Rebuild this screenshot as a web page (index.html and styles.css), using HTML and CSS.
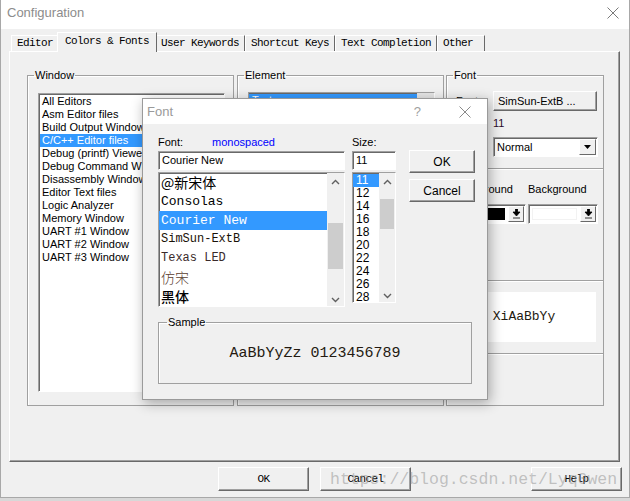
FILE: index.html
```html
<!DOCTYPE html>
<html lang="en">
<head>
    <meta charset="UTF-8">
    <title>Configuration</title>
    <link rel="stylesheet" href="styles.css">
</head>
<body>
    <div class="config">
        <div class="titlebar">
            <span class="title">Configuration</span>
            <svg class="close-icon" width="12" height="12" viewBox="0 0 12 12"><path d="M0.5 0.5 L11.5 11.5 M11.5 0.5 L0.5 11.5" stroke="#7a7a7a" stroke-width="1" fill="none"/></svg>
        </div>

        <div class="tabs">
            <div class="tab">Editor</div>
            <div class="tab active">Colors &amp; Fonts</div>
            <div class="tab">User Keywords</div>
            <div class="tab">Shortcut Keys</div>
            <div class="tab">Text Completion</div>
            <div class="tab tab-other">Other</div>
        </div>

        <div class="panel">
            <fieldset class="group group-window">
                <legend>Window</legend>
                <div class="listbox window-list">
                    <div class="items">
                        <div class="item">All Editors</div>
                        <div class="item">Asm Editor files</div>
                        <div class="item">Build Output Window</div>
                        <div class="item selected">C/C++ Editor files</div>
                        <div class="item">Debug (printf) Viewer</div>
                        <div class="item">Debug Command Window</div>
                        <div class="item">Disassembly Window</div>
                        <div class="item">Editor Text files</div>
                        <div class="item">Logic Analyzer</div>
                        <div class="item">Memory Window</div>
                        <div class="item">UART #1 Window</div>
                        <div class="item">UART #2 Window</div>
                        <div class="item">UART #3 Window</div>
                    </div>
                </div>
            </fieldset>

            <fieldset class="group group-element">
                <legend>Element</legend>
                <div class="listbox element-list">
                    <div class="items">
                        <div class="item selected">Text</div>
                    </div>
                    <div class="scrollbar"></div>
                </div>
            </fieldset>

            <fieldset class="group group-font">
                <legend>Font</legend>
                <div class="font-row">
                    <span class="row-label">Font:</span>
                    <button class="btn font-btn">SimSun-ExtB ...</button>
                </div>
                <div class="size-row">
                    <span class="row-label">Size:</span>
                    <span>11</span>
                </div>
                <div class="style-row">
                    <span class="row-label">Style:</span>
                    <div class="combo">
                        <span class="combo-text">Normal</span>
                        <span class="combo-arrow">
                            <svg width="7" height="4" viewBox="0 0 7 4"><path d="M0 0 H7 L3.5 4 Z" fill="#000"/></svg>
                        </span>
                    </div>
                </div>

                <div class="section colors">
                    <div class="color-col">
                        <span class="color-label">Foreground</span>
                        <div class="color-pick">
                            <span class="swatch swatch-black"></span>
                            <span class="pick-arrow">
                                <svg width="9" height="10" viewBox="0 0 9 10"><path d="M3.5 0 H5.5 V3 H8 L4.5 7 L1 3 H3.5 Z M1 9 H8" fill="#000" stroke="#000" stroke-width="0.8"/></svg>
                            </span>
                        </div>
                    </div>
                    <div class="color-col">
                        <span class="color-label">Background</span>
                        <div class="color-pick">
                            <span class="swatch swatch-white"></span>
                            <span class="pick-arrow">
                                <svg width="9" height="10" viewBox="0 0 9 10"><path d="M3.5 0 H5.5 V3 H8 L4.5 7 L1 3 H3.5 Z M1 9 H8" fill="#000" stroke="#000" stroke-width="0.8"/></svg>
                            </span>
                        </div>
                    </div>
                </div>

                <div class="section preview">
                    <div class="preview-box">XiAaBbYy</div>
                </div>
                <div class="section rest"></div>
            </fieldset>
        </div>

        <div class="actions">
            <button class="btn action-btn">OK</button>
            <button class="btn action-btn">Cancel</button>
            <button class="btn action-btn help-btn">Help</button>
        </div>

        <div class="watermark">https://blog.csdn.net/Lyq0wen</div>
    </div>

    <!-- Font dialog, floating over the configuration window -->
    <div class="font-dialog">
        <div class="fd-titlebar">
            <span class="fd-title">Font</span>
            <span class="fd-help">?</span>
            <svg class="fd-close" width="12" height="12" viewBox="0 0 12 12"><path d="M0.5 0.5 L11.5 11.5 M11.5 0.5 L0.5 11.5" stroke="#8a8a8a" stroke-width="1" fill="none"/></svg>
        </div>

        <div class="fd-body">
            <div class="fd-main">
                <div class="fd-col-font">
                    <div class="fd-label"><span class="fd-label-name">Font:</span><span class="fd-hint">monospaced</span></div>
                    <div class="textbox">Courier New</div>
                    <div class="listbox font-list">
                        <div class="items">
                            <div class="item f-cjk">@新宋体</div>
                            <div class="item f-mono">Consolas</div>
                            <div class="item f-mono selected">Courier New</div>
                            <div class="item f-ext">SimSun-ExtB</div>
                            <div class="item f-led">Texas LED</div>
                            <div class="item f-fang">仿宋</div>
                            <div class="item f-hei">黑体</div>
                        </div>
                        <div class="vscroll">
                            <svg class="chev" width="9" height="6" viewBox="0 0 9 6"><path d="M1 5 L4.5 1.5 L8 5" stroke="#606060" stroke-width="1.4" fill="none"/></svg>
                            <div class="thumb thumb-font"></div>
                            <svg class="chev chev-down" width="9" height="6" viewBox="0 0 9 6"><path d="M1 1 L4.5 4.5 L8 1" stroke="#606060" stroke-width="1.4" fill="none"/></svg>
                        </div>
                    </div>
                </div>

                <div class="fd-col-size">
                    <div class="fd-label">Size:</div>
                    <div class="textbox">11</div>
                    <div class="listbox size-list">
                        <div class="items">
                            <div class="item selected">11</div>
                            <div class="item">12</div>
                            <div class="item">14</div>
                            <div class="item">16</div>
                            <div class="item">18</div>
                            <div class="item">20</div>
                            <div class="item">22</div>
                            <div class="item">24</div>
                            <div class="item">26</div>
                            <div class="item">28</div>
                        </div>
                        <div class="vscroll">
                            <svg class="chev" width="9" height="6" viewBox="0 0 9 6"><path d="M1 5 L4.5 1.5 L8 5" stroke="#606060" stroke-width="1.4" fill="none"/></svg>
                            <div class="thumb thumb-size"></div>
                            <svg class="chev chev-down" width="9" height="6" viewBox="0 0 9 6"><path d="M1 1 L4.5 4.5 L8 1" stroke="#606060" stroke-width="1.4" fill="none"/></svg>
                        </div>
                    </div>
                </div>

                <div class="fd-col-buttons">
                    <button class="btn fd-btn">OK</button>
                    <button class="btn fd-btn">Cancel</button>
                </div>
            </div>

            <fieldset class="group sample">
                <legend>Sample</legend>
                <div class="sample-text">AaBbYyZz 0123456789</div>
            </fieldset>
        </div>
    </div>
</body>
</html>
```

FILE: styles.css
```css
/* Basic Reset */
* {
    margin: 0;
    padding: 0;
    box-sizing: border-box;
}

body {
    position: relative;
    width: 630px;
    height: 501px;
    overflow: hidden;
    background: #d8d8d8;
    font-family: "Liberation Sans", Arial, sans-serif;
    font-size: 11px;
    color: #000;
}

button {
    font: inherit;
    color: inherit;
}

/* Configuration window */
.config {
    position: relative;
    width: 630px;
    height: 498px;
    background: #f0f0f0;
    border: 1px solid #a8a8a8;
    border-top: none;
}

.titlebar {
    display: flex;
    align-items: center;
    justify-content: space-between;
    height: 29px;
    padding: 0 10px 4px 6px;
    background: #fff;
}

.title {
    font-size: 13px;
    color: #8c8c8c;
}

/* Tabs */
.tabs {
    display: flex;
    align-items: flex-end;
    height: 22px;
    padding-left: 10px;
}

.tab {
    height: 16px;
    padding: 0 5px;
    border: 1px solid #fff;
    border-bottom: none;
    border-right-color: #696969;
    background: #f0f0f0;
    font-family: "Liberation Mono", "Courier New", monospace;
    font-size: 11px;
    letter-spacing: -0.6px;
    line-height: 15px;
}

.tab.active {
    position: relative;
    height: 20px;
    margin: 0 -2px -1px;
    padding: 0 7px;
    line-height: 17px;
    z-index: 1;
}

.tab-other {
    min-width: 48px;
}

.panel {
    display: flex;
    gap: 3px;
    width: 611px;
    height: 411px;
    margin-left: 8px;
    padding: 17px 0 0 17px;
    border: 1px solid #fff;
    border-right-color: #696969;
    border-bottom-color: #696969;
    box-shadow: inset -1px -1px 0 #a0a0a0;
}

/* Group boxes */
.group {
    border: 1px solid #a0a0a0;
    box-shadow: inset 1px 1px 0 #fff;
}

.group legend {
    margin-left: 6px;
    padding: 0 1px;
    line-height: 13px;
    font-size: 11px;
}

.group-window,
.group-element {
    width: 207px;
    height: 337px;
}

.group-font {
    width: 158px;
    height: 337px;
    margin-left: -1px;
    padding-top: 9px;
}

/* List boxes */
.listbox {
    display: flex;
    background: #fff;
    border: 1px solid;
    border-color: #a0a0a0 #fff #fff #a0a0a0;
    box-shadow: inset 1px 1px 0 #696969;
    overflow: hidden;
}

.listbox .items {
    flex: 1;
    padding-top: 1px;
}

.listbox .item {
    height: 13px;
    padding-left: 3px;
    line-height: 13px;
    white-space: nowrap;
}

.listbox .item.selected {
    background: #3399ff;
    color: #fff;
}

.window-list,
.element-list {
    width: 187px;
    height: 299px;
    margin: 11px 0 0 10px;
}

.element-list {
    margin-top: 10px;
}

.window-list .item.selected {
    margin-left: 1px;
    padding-left: 2px;
}

.element-list .scrollbar {
    width: 17px;
    background: #e6e6e6;
}

/* Font group */
.font-row,
.size-row,
.style-row {
    display: flex;
    align-items: center;
    margin-left: 9px;
}

.font-row {
    height: 20px;
}

.size-row {
    height: 16px;
    margin-top: 4px;
    color: #2a0a2a;
}

.style-row {
    height: 20px;
    margin-top: 6px;
}

.row-label {
    width: 37px;
}

.btn {
    background: #f0f0f0;
    border: 1px solid;
    border-color: #fff #696969 #696969 #fff;
    box-shadow: inset -1px -1px 0 #a0a0a0;
    cursor: pointer;
}

.font-btn {
    width: 104px;
    height: 20px;
    padding-left: 4px;
    text-align: left;
    font-size: 11px;
}

.combo {
    display: flex;
    width: 105px;
    height: 20px;
    background: #fff;
    border: 1px solid;
    border-color: #a0a0a0 #fff #fff #a0a0a0;
    box-shadow: inset 1px 1px 0 #696969;
}

.combo-text {
    flex: 1;
    padding: 3px 0 0 3px;
    font-size: 11px;
}

.combo-arrow {
    display: flex;
    align-items: center;
    justify-content: center;
    width: 17px;
    margin: 1px 1px 1px 0;
    background: #f0f0f0;
    border: 1px solid;
    border-color: #fff #696969 #696969 #fff;
}

.section {
    margin-top: 11px;
    border-top: 1px solid #a0a0a0;
    box-shadow: inset 0 1px 0 #fff;
}

.colors {
    display: flex;
    gap: 2px;
    height: 112px;
    padding: 14px 0 0 9px;
}

.color-col {
    display: flex;
    flex-direction: column;
    width: 70px;
}

.color-label {
    height: 13px;
    line-height: 13px;
    white-space: nowrap;
}

.color-pick {
    display: flex;
    height: 20px;
    margin-top: 8px;
    border: 1px solid;
    border-color: #a0a0a0 #fff #fff #a0a0a0;
    box-shadow: inset 1px 1px 0 #696969;
    background: #fff;
}

.swatch {
    flex: 1;
    margin: 3px;
}

.swatch-black {
    background: #000;
}

.swatch-white {
    background: #fff;
    border: 1px solid #f2f2f2;
}

.pick-arrow {
    display: flex;
    align-items: center;
    justify-content: center;
    width: 16px;
    margin: 1px 1px 1px 0;
    background: #f0f0f0;
    border: 1px solid;
    border-color: #fff #696969 #696969 #fff;
}

.preview {
    height: 73px;
    margin-top: 0;
    padding: 11px 0 0 5px;
}

.preview-box {
    width: 144px;
    height: 50px;
    background: #fff;
    font-family: "Liberation Mono", "Courier New", monospace;
    font-size: 13px;
    line-height: 50px;
    text-align: center;
    color: #241a10;
}

.rest {
    margin-top: 0;
    height: 40px;
}

/* Bottom buttons */
.actions {
    display: flex;
    gap: 11px;
    padding: 5px 0 0 217px;
}

.action-btn {
    width: 91px;
    height: 24px;
    font-family: "Liberation Mono", "Courier New", monospace;
    font-size: 11px;
    letter-spacing: -0.6px;
}

.help-btn {
    margin-left: 109px;
}

.watermark {
    position: absolute;
    left: 329px;
    top: 469px;
    font-family: "Liberation Mono", "Courier New", monospace;
    font-size: 16.5px;
    line-height: 22px;
    color: rgba(150, 150, 150, 0.55);
    white-space: nowrap;
}

/* Font dialog */
.font-dialog {
    position: absolute;
    left: 142px;
    top: 98px;
    width: 346px;
    height: 302px;
    background: #f0f0f0;
    border: 1px solid #9a9a9a;
    box-shadow: 2px 3px 12px rgba(0, 0, 0, 0.32);
}

.fd-titlebar {
    display: flex;
    align-items: center;
    height: 25px;
    padding-left: 4px;
    background: #fff;
}

.fd-title {
    flex: 1;
    font-size: 13px;
    color: #9a9a9a;
}

.fd-help {
    margin-right: 38px;
    font-size: 13px;
    color: #a0a0a0;
}

.fd-close {
    margin-right: 16px;
}

.fd-body {
    padding: 11px 0 0 15px;
}

.fd-main {
    display: flex;
}

.fd-label {
    height: 14px;
    line-height: 14px;
    font-size: 11px;
}

.fd-label-name {
    display: inline-block;
    width: 54px;
}

.fd-hint {
    color: #0000ff;
}

.textbox {
    height: 19px;
    margin-top: 2px;
    padding: 2px 0 0 3px;
    background: #fff;
    border: 1px solid;
    border-color: #a0a0a0 #fff #fff #a0a0a0;
    box-shadow: inset 1px 1px 0 #696969;
    font-size: 11px;
}

.fd-col-font {
    width: 187px;
}

.font-list {
    height: 135px;
    margin-top: 2px;
}

.font-list .items {
    padding-top: 0;
}

.font-list .item {
    height: 19px;
    padding-left: 2px;
    line-height: 19px;
}

.f-mono {
    font-family: "Liberation Mono", "Courier New", monospace;
    font-size: 13px;
}

.f-ext {
    font-family: "Liberation Mono", "Courier New", monospace;
    font-size: 12px;
    color: #1a1208;
}

.f-led {
    font-family: "Liberation Mono", "Courier New", monospace;
    font-size: 12px;
    color: #3a2a2a;
}

.f-cjk,
.f-fang,
.f-hei {
    font-family: "Noto Sans CJK SC", sans-serif;
    font-size: 14px;
}

.f-fang {
    color: #5a4030;
    font-weight: 300;
}

.f-hei {
    font-weight: 500;
}

.vscroll {
    position: relative;
    display: flex;
    flex-direction: column;
    align-items: center;
    width: 17px;
    background: #f0f0f0;
}

.chev {
    margin-top: 6px;
}

.chev-down {
    position: absolute;
    bottom: 3px;
}

.thumb {
    position: absolute;
    left: 1px;
    right: 1px;
    background: #cdcdcd;
}

.thumb-font {
    top: 50px;
    height: 46px;
}

.fd-col-size {
    width: 44px;
    margin-left: 7px;
}

.size-list {
    height: 131px;
    margin-top: 2px;
}

.size-list .items {
    padding-top: 1px;
}

.size-list .item {
    font-size: 12px;
}

.size-list .vscroll {
    width: 16px;
}

.thumb-size {
    top: 26px;
    height: 30px;
}

.fd-col-buttons {
    display: flex;
    flex-direction: column;
    gap: 6px;
    width: 66px;
    margin: 15px 0 0 13px;
}

.fd-btn {
    height: 23px;
    font-size: 12px;
}

.sample {
    width: 314px;
    margin-top: 9px;
    padding-bottom: 20px;
}

.sample legend {
    margin-left: 8px;
}

.sample-text {
    padding-top: 16px;
    line-height: 18px;
    text-align: center;
    font-family: "Liberation Mono", "Courier New", monospace;
    font-size: 15px;
    color: #241a10;
}
```
